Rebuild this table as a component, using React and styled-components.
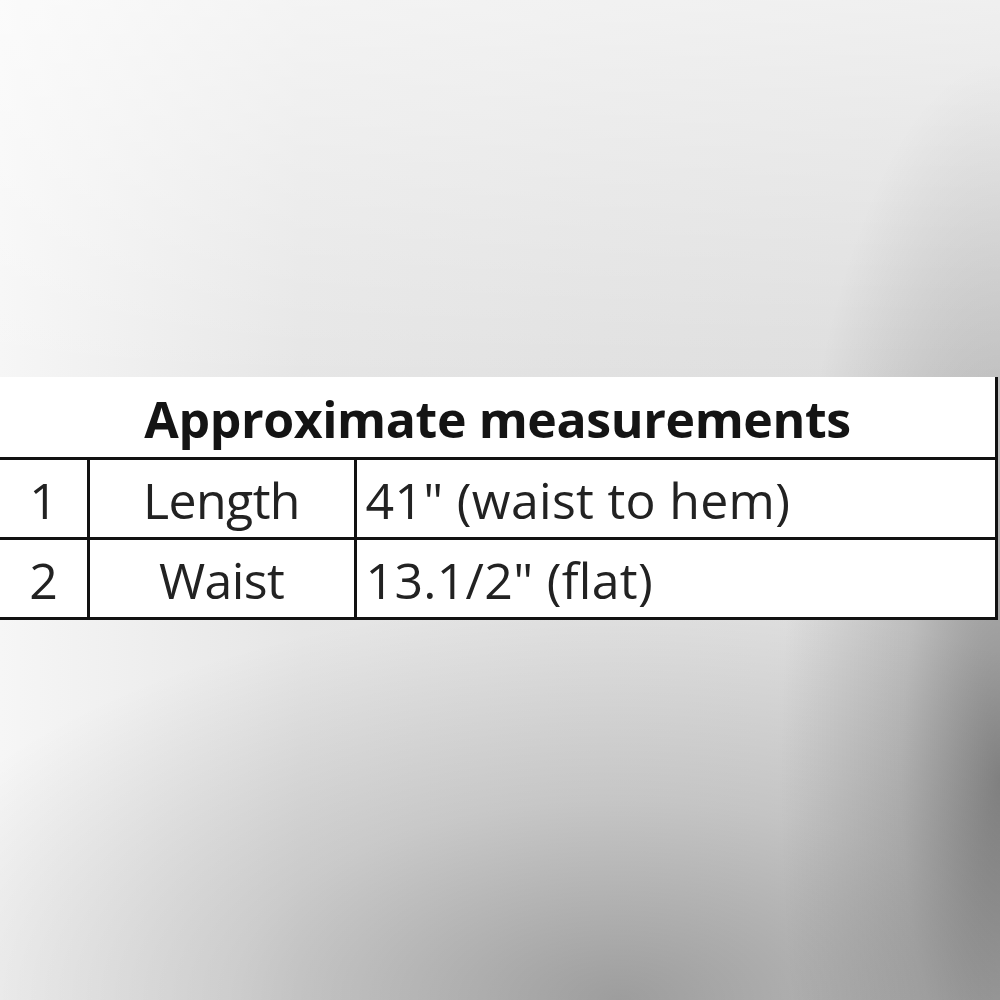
import React from 'react'
import styled, { createGlobalStyle } from 'styled-components'

const GlobalStyle = createGlobalStyle`
  html, body {
    margin: 0;
    padding: 0;
  }
  body {
    font-family: "Open Sans", "Liberation Sans", sans-serif;
  }
`

const Page = styled.div`
  width: 1000px;
  height: 1000px;
  display: flex;
  flex-direction: column;
  padding-top: 377px;
  box-sizing: border-box;
  background:
    radial-gradient(ellipse 22% 72% at 100% 78%, rgba(0, 0, 0, 0.38) 0%, rgba(0, 0, 0, 0.15) 45%, rgba(0, 0, 0, 0) 100%),
    radial-gradient(ellipse 78% 40% at 62% 100%, rgba(0, 0, 0, 0.3) 0%, rgba(0, 0, 0, 0.12) 50%, rgba(0, 0, 0, 0) 100%),
    linear-gradient(to bottom, rgba(255, 255, 255, 0.55) 0%, rgba(255, 255, 255, 0) 38%),
    linear-gradient(to right, #f6f6f6 0%, #e6e6e6 30%, #e1e1e1 60%, #dcdcdc 100%);
`

const Table = styled.table`
  width: 998px;
  border-collapse: collapse;
  table-layout: fixed;
  background: #fff;
  border-right: 3px solid #111;
`

const Col = styled.col`
  width: ${({ $w }) => ($w ? `${$w}px` : 'auto')};
`

const HeadCell = styled.th`
  height: 81px;
  padding: 5px 0 0;
  box-sizing: border-box;
  text-align: center;
  font-size: 50px;
  font-weight: 700;
  color: #141414;
  letter-spacing: -0.4px;
  border-bottom: 3px solid #111;
`

const Cell = styled.td`
  height: 80px;
  box-sizing: border-box;
  padding: 4px ${({ $align }) => ($align === 'left' ? '9px' : '0')} 0;
  text-align: ${({ $align }) => $align || 'center'};
  font-size: 50px;
  color: #222;
  letter-spacing: ${({ $align }) => ($align === 'left' ? '0.3px' : '-0.6px')};
  border-bottom: 3px solid #111;
  border-left: ${({ $first }) => ($first ? 'none' : '3px solid #111')};
  white-space: nowrap;
`

const rows = [
  { n: '1', name: 'Length', value: '41" (waist to hem)' },
  { n: '2', name: 'Waist', value: '13.1/2" (flat)' },
]

export default function App() {
  return (
    <>
      <GlobalStyle />
      <Page>
        <Table>
          <colgroup>
            <Col $w={88} />
            <Col $w={267} />
            <Col />
          </colgroup>
          <thead>
            <tr>
              <HeadCell colSpan={3}>Approximate measurements</HeadCell>
            </tr>
          </thead>
          <tbody>
            {rows.map((r) => (
              <tr key={r.n}>
                <Cell $first>{r.n}</Cell>
                <Cell>{r.name}</Cell>
                <Cell $align="left">{r.value}</Cell>
              </tr>
            ))}
          </tbody>
        </Table>
      </Page>
    </>
  )
}
